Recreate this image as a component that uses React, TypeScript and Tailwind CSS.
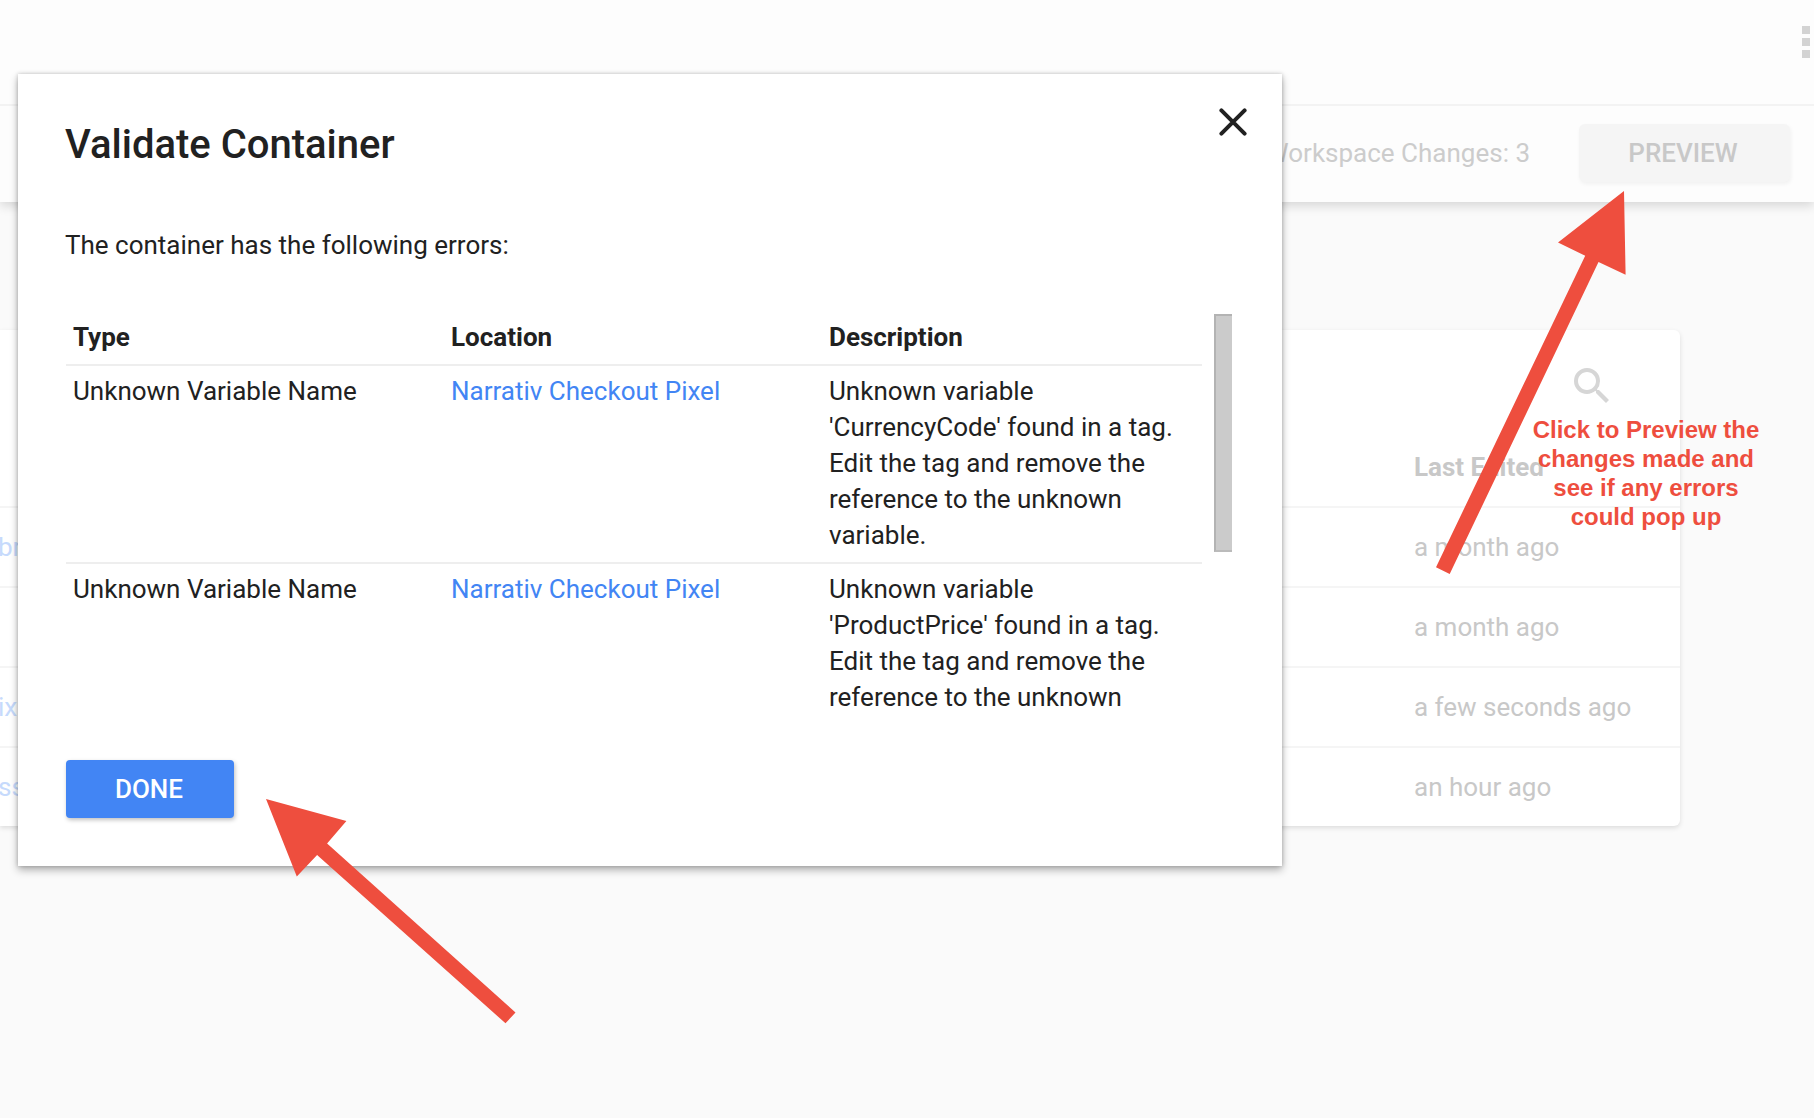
import React from "react";

const errors = [
  { type: "Unknown Variable Name", location: "Narrativ Checkout Pixel", variable: "CurrencyCode" },
  { type: "Unknown Variable Name", location: "Narrativ Checkout Pixel", variable: "ProductPrice" },
];

const tagRows = [
  { name: "br", shift: "-ml-0.5", edited: "a month ago" },
  { name: "", shift: "", edited: "a month ago" },
  { name: "ix", shift: "-ml-[2px]", edited: "a few seconds ago" },
  { name: "ss", shift: "-ml-[2px]", edited: "an hour ago" },
];

function Header() {
  return (
    <header className="relative bg-[#fdfdfd] shadow-[0_4px_10px_rgba(0,0,0,0.14)]">
      <div className="flex h-[106px] justify-end border-b-2 border-[#f3f3f3] pt-[26px] pr-1">
        <div className="flex flex-col gap-1">
          <span className="size-2 bg-[#d3d3d3]" />
          <span className="size-2 bg-[#d3d3d3]" />
          <span className="size-2 bg-[#d3d3d3]" />
        </div>
      </div>
      <div className="flex h-24 items-start justify-end gap-12 pt-[18px] pr-6">
        <span className="mt-[11px] text-[#cccccc]">Workspace Changes: 3</span>
        <button className="ml-px h-[58px] w-[211px] rounded-md bg-[#f5f5f5] pr-[3px] font-medium text-[#c8c8c8] shadow-[1px_2px_4px_rgba(0,0,0,0.05)]">
          PREVIEW
        </button>
      </div>
    </header>
  );
}

function TagTable() {
  return (
    <section className="mt-32 w-[1680px] rounded-r-md bg-white text-[#c8c8c8] shadow-[0_2px_5px_rgba(0,0,0,0.12)]">
      <div className="flex h-[178px] flex-col justify-between border-b-2 border-[#f5f5f5] pt-8 pb-[21px]">
        <svg className="mr-16 size-12 self-end" viewBox="0 0 24 24" fill="#d6d6d6">
          <path d="M15.5 14h-.79l-.28-.27A6.471 6.471 0 0 0 16 9.5 6.5 6.5 0 1 0 9.5 16c1.61 0 3.09-.59 4.23-1.57l.27.28v.79l5 4.99L20.49 19l-4.99-5zm-6 0C7.01 14 5 11.99 5 9.5S7.01 5 9.5 5 14 7.01 14 9.5 11.99 14 9.5 14z" />
        </svg>
        <div className="pl-[1414px] font-bold">Last Edited</div>
      </div>
      {tagRows.map((row, i) => (
        <div key={i} className="flex h-20 items-center border-b-2 border-[#f5f5f5] last:h-[78px] last:border-b-0">
          <div className="w-[1414px] text-[#c6dafc]">
            <span className={row.shift}>{row.name}</span>
          </div>
          <span>{row.edited}</span>
        </div>
      ))}
    </section>
  );
}

function ErrorTable() {
  return (
    <div className="mt-[50px] flex h-[400px] justify-between overflow-hidden">
      <div className="w-[1136px]">
        <div className="grid h-[52px] grid-cols-[379px_378px_379px] border-b-2 border-[#eeeeee] pt-[5px] font-bold">
          <div className="pl-[7px]">Type</div>
          <div className="pl-1.5">Location</div>
          <div className="pl-1.5">Description</div>
        </div>
        {errors.map((e) => (
          <div
            key={e.variable}
            className="grid h-[198px] grid-cols-[379px_378px_379px] border-b-2 border-[#eeeeee] pt-[7px]"
          >
            <div className="pl-[7px]">{e.type}</div>
            <a className="pl-1.5 text-[#4285f4]">{e.location}</a>
            <div className="px-1.5">
              Unknown variable '{e.variable}' found in a tag. Edit the tag and remove the reference to the unknown
              variable.
            </div>
          </div>
        ))}
      </div>
      <div className="h-[238px] w-[18px] border-y-2 border-l-2 border-t-[#b3b3b3] border-b-[#bbbbbb] border-l-[#b3b3b3] bg-[#cbcbcb]" />
    </div>
  );
}

function ValidateDialog() {
  return (
    <div
      role="dialog"
      className="absolute top-[74px] left-[18px] flex h-[792px] w-[1264px] flex-col bg-white pr-[50px] pl-12 text-[#212121] shadow-[0_4px_8px_rgba(0,0,0,0.3),0_0_4px_rgba(0,0,0,0.2)]"
    >
      <button aria-label="Close" className="absolute top-[34px] right-[35px]">
        <svg width="28" height="28" viewBox="0 0 28 28" stroke="#212121" strokeWidth="4" strokeLinecap="round">
          <path d="M2.4 2.4 25.6 25.6M25.6 2.4 2.4 25.6" />
        </svg>
      </button>
      <h1 className="mt-[47px] -ml-px text-[40px] leading-[48px] font-medium">Validate Container</h1>
      <p className="mt-[58px] -ml-px">The container has the following errors:</p>
      <div className="mt-px">
        <ErrorTable />
      </div>
      <button className="mt-[46px] h-[58px] w-[168px] shrink-0 rounded bg-[#4285f4] pr-0.5 font-medium text-white shadow-[1px_2px_4px_rgba(0,0,0,0.25)]">
        DONE
      </button>
    </div>
  );
}

function Annotations() {
  return (
    <>
      <svg className="absolute inset-0" width="1814" height="1118" fill="#ee4e3e">
        <path d="M266 799 346.4 821 327.1 843.5 515.5 1012.5 505.5 1023.3 317.1 855 296.8 876.5Z" />
        <path d="M1624 191 1625.6 274.7 1598.5 262 1449.7 574 1436 567.3 1585.2 255.7 1558 242.5Z" />
      </svg>
      <p className="absolute top-[415px] left-[1516px] w-[260px] text-center font-['Liberation_Sans',Helvetica,sans-serif] text-[24px] leading-[29px] font-bold tracking-normal text-[#ee4e3e]">
        Click to Preview the
        <br />
        changes made and
        <br />
        see if any errors
        <br />
        could pop up
      </p>
    </>
  );
}

export default function App() {
  return (
    <main className="relative h-[1118px] w-[1814px] overflow-hidden bg-[#fafafa] font-[Roboto,sans-serif] text-[26px] leading-9">
      <Header />
      <TagTable />
      <ValidateDialog />
      <Annotations />
    </main>
  );
}
